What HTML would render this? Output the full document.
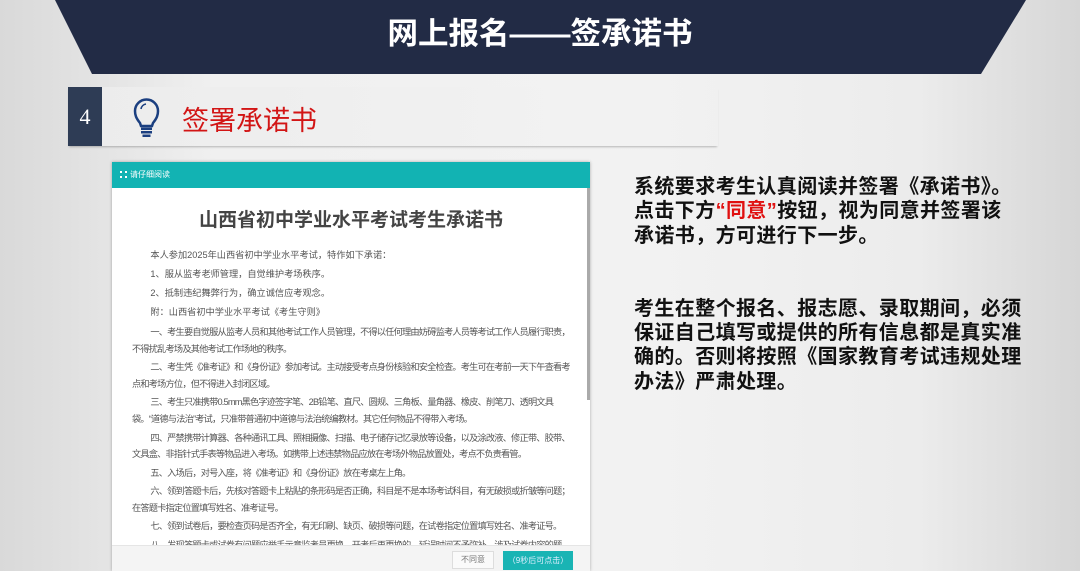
<!DOCTYPE html>
<html><head><meta charset="utf-8"><style>
*{margin:0;padding:0;box-sizing:border-box}
html,body{width:1080px;height:571px;overflow:hidden}
body{position:relative;font-family:"Liberation Sans","Noto Sans CJK SC",sans-serif;background:linear-gradient(90deg,#d9d9d9 0%,#f0f0f0 20%,#f2f2f2 60%,#ececec 85%,#d6d6d6 100%)}
.banner{position:absolute;left:0;top:0;width:1080px;height:74px;background:#222b45;clip-path:polygon(55px 0,1026px 0,981px 74px,92px 74px)}
.title{position:absolute;top:9px;left:0;width:1080px;text-align:center;color:#fff;font-size:30.5px;font-weight:bold}
.bar{position:absolute;left:68px;top:87px;width:650px;height:59px;background:linear-gradient(90deg,#ececec,#f2f2f2 80%,rgba(242,242,242,0));box-shadow:0 2px 2px -1px rgba(0,0,0,.25)}
.num{position:absolute;left:68px;top:87px;width:34px;height:59px;background:#2e3c55;color:#fff;font-family:"Liberation Serif",serif;font-size:22px;text-align:center;line-height:59px}
.sub{position:absolute;left:182px;top:99px;color:#d21515;font-size:27px}
.modal{position:absolute;left:112px;top:162px;width:478px;height:409px;background:#fff;box-shadow:0 0 3px rgba(0,0,0,.3);overflow:hidden}
.mh{height:26px;background:#12b3b3;color:#fff;font-size:8px;line-height:26px;padding-left:8px}
.mh i{display:inline-block;width:7px;height:7px;border:2px dotted #fff;vertical-align:-1px;margin-right:3px}
.mt{text-align:center;font-size:19px;font-weight:bold;color:#444;margin-top:17px}
.mb{font-size:9.2px;letter-spacing:-0.8px;color:#555;padding:0 0 0 20px;line-height:16.8px;margin-top:14px;white-space:nowrap}
.mb p{text-indent:2em;margin-bottom:1.6px}
.mb p.c{line-height:19px;margin-bottom:0;letter-spacing:0}
.mb p.c4{margin-bottom:2px}
.sb{position:absolute;left:475px;top:26px;width:3px;height:212px;background:#aaa}
.foot{position:absolute;left:0;top:383px;width:478px;height:26px;background:#f4f4f4;border-top:1px solid #e5e5e5}
.b1{position:absolute;left:340px;top:5px;width:42px;height:18px;border:1px solid #ddd;background:#fafafa;font-size:8px;color:#777;text-align:center;line-height:16px}
.b2{position:absolute;left:391px;top:5px;width:70px;height:19px;background:#19b4b4;font-size:8px;color:#def;text-align:center;line-height:19px}
.right{position:absolute;left:634px;top:175px;font-size:20px;letter-spacing:0.4px;font-weight:bold;color:#111;line-height:24.3px;white-space:nowrap}
.right span{color:#e01010}
</style></head><body>
<div class="banner"></div>
<div class="title">网上报名——签承诺书</div>
<div class="bar"></div>
<div class="num">4</div>
<svg style="position:absolute;left:132px;top:97px" width="30" height="42" viewBox="0 0 30 42"><path d="M8 26 C4 21 3 18 3 14 A11.5 11.5 0 0 1 26 14 C26 18 25 21 21 26 L20 29 L9 29 Z" fill="none" stroke="#1b3f80" stroke-width="2.5"/><rect x="9" y="30.5" width="11" height="2.5" fill="#1b3f80"/><rect x="9" y="34" width="11" height="2.5" fill="#1b3f80"/><rect x="10.5" y="37.5" width="8" height="2.5" fill="#1b3f80"/><path d="M9 12 A6 6 0 0 1 14 7" fill="none" stroke="#1b3f80" stroke-width="1.6"/></svg>
<div class="sub">签署承诺书</div>
<div class="modal">
<div class="mh"><i></i>请仔细阅读</div>
<div class="mt">山西省初中学业水平考试考生承诺书</div>
<div class="mb">
<p class="c">本人参加2025年山西省初中学业水平考试，特作如下承诺：</p>
<p class="c">1、服从监考老师管理，自觉维护考场秩序。</p>
<p class="c">2、抵制违纪舞弊行为，确立诚信应考观念。</p>
<p class="c c4">附：山西省初中学业水平考试《考生守则》</p>
<p>一、考生要自觉服从监考人员和其他考试工作人员管理，不得以任何理由妨碍监考人员等考试工作人员履行职责，<br>不得扰乱考场及其他考试工作场地的秩序。</p>
<p>二、考生凭《准考证》和《身份证》参加考试。主动接受考点身份核验和安全检查。考生可在考前一天下午查看考<br>点和考场方位，但不得进入封闭区域。</p>
<p>三、考生只准携带0.5mm黑色字迹签字笔、2B铅笔、直尺、圆规、三角板、量角器、橡皮、削笔刀、透明文具<br>袋。“道德与法治”考试，只准带普通初中道德与法治统编教材。其它任何物品不得带入考场。</p>
<p>四、严禁携带计算器、各种通讯工具、照相摄像、扫描、电子储存记忆录放等设备，以及涂改液、修正带、胶带、<br>文具盒、非指针式手表等物品进入考场。如携带上述违禁物品应放在考场外物品放置处，考点不负责看管。</p>
<p>五、入场后，对号入座，将《准考证》和《身份证》放在考桌左上角。</p>
<p>六、领到答题卡后，先核对答题卡上粘贴的条形码是否正确，科目是不是本场考试科目，有无破损或折皱等问题；<br>在答题卡指定位置填写姓名、准考证号。</p>
<p>七、领到试卷后，要检查页码是否齐全，有无印刷、缺页、破损等问题，在试卷指定位置填写姓名、准考证号。</p>
<p>八、发现答题卡或试卷有问题应举手示意监考员更换，开考后再更换的，延误时间不予弥补，涉及试卷内容的题</p>
</div>
<div class="sb"></div>
<div class="foot"><div class="b1">不同意</div><div class="b2">（9秒后可点击）</div></div>
</div>
<div class="right">
<p>系统要求考生认真阅读并签署《承诺书》。<br>点击下方<span>“同意”</span>按钮，视为同意并签署该<br>承诺书，方可进行下一步。</p>
<p style="margin-top:49px">考生在整个报名、报志愿、录取期间，必须<br>保证自己填写或提供的所有信息都是真实准<br>确的。否则将按照《国家教育考试违规处理<br>办法》严肃处理。</p>
</div>
</body></html>
